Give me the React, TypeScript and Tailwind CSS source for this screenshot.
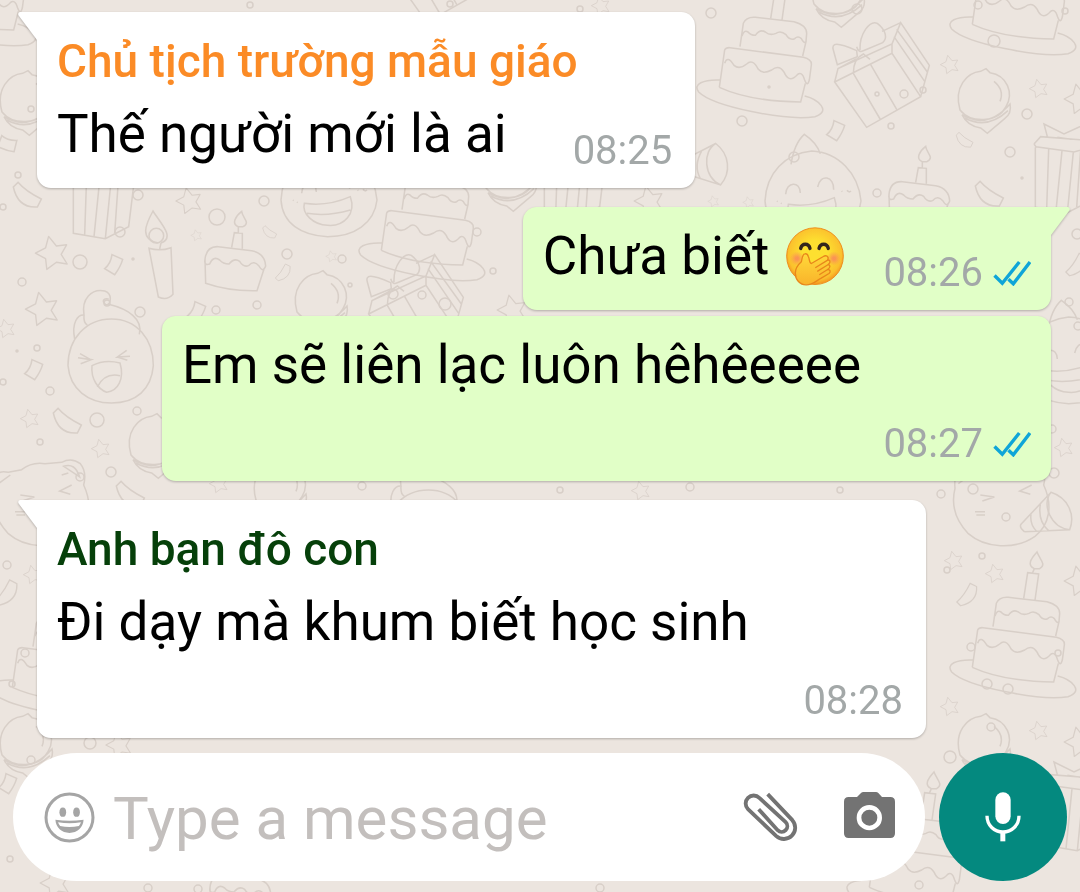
import type { ReactNode } from "react";

type At = { x: number; y: number; r?: number; s?: number };

/* Doodles are drawn on a grid three times finer than the page. */
function Doodle({ x, y, r = 0, s = 1, children }: At & { children: ReactNode }) {
  return <g transform={`translate(${x} ${y}) rotate(${r}) scale(${s / 3})`}>{children}</g>;
}

const Cake = (p: At) => (
  <Doodle {...p}>
    <path d="M90 240C40 238 8 252 26 276C70 320 290 364 375 350C425 334 385 298 344 288" />
    <path d="M88 262Q180 304 332 306L346 250" />
    <path d="M88 262L104 150Q108 142 120 143L340 172Q366 178 364 195L358 240Q352 262 344 240Q336 212 322 224Q300 248 286 224Q270 190 245 210Q218 224 205 208Q188 174 170 192Q148 210 132 196Q112 164 104 190" />
    <path d="M150 140L160 70Q168 50 196 52L312 65Q350 75 350 100L348 125Q342 132 334 116Q324 106 314 116Q298 122 288 104Q272 90 258 100Q240 108 226 96Q210 86 196 106Q182 106 174 96Q162 88 156 108M348 125L338 168" />
    <path d="M242 56L254 -22L287 -18L276 60M268 -20L274 -34M274 -34C252 -44 262 -62 282 -84C290 -62 312 -46 290 -34Z" />
  </Doodle>
);

const Gift = (p: At) => (
  <Doodle {...p}>
    <path d="M434 246L606 160L692 290L530 382ZM434 246L444 206L606 132L632 68L718 196L692 290M606 160V132M444 206L500 176M576 94L632 68M620 88L712 216M612 110L704 244M490 220L572 360M542 194L620 328M490 220Q490 176 520 162L540 178" />
    <path d="M500 152C440 126 424 128 430 150L442 194L502 170ZM510 150C508 100 540 60 562 70C590 92 592 116 578 128L520 152Q506 160 500 140" />
  </Doodle>
);

const Present = (p: At) => (
  <Doodle {...p}>
    <path d="M0 60L20 38L170 50L200 30M0 60L6 68L120 84L200 60M4 70V250L100 266L170 230L190 66M44 76L38 254M84 80L66 260M118 84L100 266M140 78L128 250M40 38L30 0L90 30L150 2L148 46M70 40L110 46" />
  </Doodle>
);

const Star = (p: At) => (
  <Doodle {...p}>
    <path d="M-8 -52L18 -20L52 -24L34 8L54 40L18 34L-14 58L-18 22L-52 4L-18 -14Z" strokeLinejoin="round" />
  </Doodle>
);

const Balloon = (p: At) => (
  <Doodle {...p}>
    <path d="M-72 30C-92 -40 -50 -82 -10 -86L6 -94L18 -82C70 -74 90 -20 66 20C40 70 -40 70 -72 30ZM30 -56Q62 -30 48 4M-66 44Q10 90 78 12Q84 40 62 56L10 100L-10 84Q-50 78 -66 44M-58 54Q10 90 72 32" />
  </Doodle>
);

const Slice = (p: At) => (
  <Doodle {...p}>
    <path d="M0 40Q4 0 40 2L140 14Q180 22 182 60Q174 82 162 60Q146 42 132 58Q116 66 104 46Q88 34 72 54Q54 54 44 42Q24 28 14 54Q-4 60 0 40L2 112Q70 136 156 134L178 66M80 4L88 -40L112 -38L112 8M100 -40V-58M100 -58C78 -66 92 -90 110 -104C112 -84 138 -70 114 -58Z" />
  </Doodle>
);

const Candle = (p: At) => (
  <Doodle {...p}>
    <path d="M0 112Q34 122 66 110L72 250Q54 270 28 258ZM32 114L36 96M28 96C-30 84 -10 40 12 0C34 36 80 80 36 96" />
    <circle cx="22" cy="74" r="22" />
  </Doodle>
);

const Bean = (p: At) => (
  <Doodle {...p}>
    <path d="M-30 -38Q-6 -10 40 12L28 36Q-30 40 -44 -24Z" />
  </Doodle>
);

const Paper = (p: At) => (
  <Doodle {...p}>
    <path d="M-6 -28L26 -14Q20 8 2 32L-28 14Q-10 0 -6 -28Z" />
  </Doodle>
);

const LaughingFace = (p: At) => (
  <Doodle {...p}>
    <path d="M0 140C0 60 54 0 130 0C206 0 256 60 256 140C250 210 206 252 130 252C60 252 6 210 0 140ZM20 60C10 10 30 -14 48 -12C40 -60 70 -92 110 -84C134 -76 130 -44 114 -42C100 -54 106 -64 122 -60M122 -44C180 -30 226 0 214 46M48 -12Q46 12 58 18M30 116L70 122L38 134M36 104L68 122M186 112L148 114L176 94M148 114L178 124M72 140Q110 120 156 132C170 180 150 216 116 220C90 210 68 180 72 140ZM88 204Q110 160 156 170" />
  </Doodle>
);

const SmilingFace = (p: At) => (
  <Doodle {...p}>
    <path d="M0 150C4 66 60 8 140 0C220 4 280 66 288 150C280 220 220 260 140 260C60 256 4 220 0 150ZM78 40Q88 -24 118 -50Q154 -26 166 8M62 130C64 90 106 90 106 126M158 108C166 66 208 76 206 116M70 160Q140 170 208 140C226 190 190 230 140 226C96 224 62 190 70 160ZM78 190Q140 200 208 180M36 150l2 2M48 156l2 2M230 120l2 2M246 118q6 8 12 2" />
  </Doodle>
);

const CatFace = (p: At) => (
  <Doodle {...p}>
    <path d="M-30 70Q-36 10 10 22L50 14Q80 -10 120 -4L170 -8Q200 -24 226 -4Q246 20 236 60C264 120 254 180 210 214C150 256 60 250 10 206C-34 160 -40 110 -30 70ZM-20 56L16 30M176 4Q210 -8 224 36ZM46 90L88 96L52 108M200 60L164 78L196 88M30 140h30M34 150h26M170 30l20 -6" />
  </Doodle>
);

const Horn = (p: At) => (
  <Doodle {...p}>
    <path d="M0 100L90 4C140 20 164 70 146 116L10 122M90 4C60 40 90 110 146 116M58 40Q50 90 82 118M30 70Q26 100 46 120M10 122Q-6 108 0 100" />
  </Doodle>
);

const confetti: [number, number, number][] = [
  [711, 13, 5], [857, 9, 5], [978, 5, 4], [994, 41, 6], [742, 121, 5], [891, 126, 3], [904, 94, 4], [923, 90, 3],
  [877, 94, 2], [769, 87, 1], [1027, 114, 5], [1010, 152, 5], [1022, 178, 1], [877, 193, 4], [794, 157, 5], [1065, 11, 3],
  [138, 195, 5], [217, 217, 8], [264, 201, 5], [120, 232, 5], [80, 262, 7], [22, 282, 4], [133, 259, 1], [287, 254, 5],
  [342, 259, 4], [477, 232, 4], [493, 271, 3], [445, 304, 6], [422, 295, 4], [393, 294, 5], [350, 285, 2], [257, 305, 4],
  [216, 310, 4], [140, 312, 5], [107, 303, 3], [37, 348, 3], [50, 391, 4], [3, 382, 3], [17, 351, 1], [137, 411, 4],
  [97, 420, 7], [40, 442, 3], [111, 472, 5], [80, 477, 4], [362, 486, 4], [941, 494, 4], [973, 489, 5], [1054, 473, 5],
  [1006, 517, 4], [982, 556, 3], [947, 570, 3], [971, 647, 4], [1058, 653, 3], [987, 684, 5], [1008, 689, 5], [991, 727, 4],
  [950, 757, 6], [7, 565, 4], [25, 653, 4], [12, 684, 3], [90, 743, 6], [31, 760, 4], [10, 859, 3], [919, 885, 4],
  [1077, 234, 5], [1078, 326, 4], [1052, 429, 4], [1069, 302, 4], [3, 207, 3], [31, 109, 3], [18, 175, 3], [198, 889, 4],
  [250, 5, 3], [450, 4, 3], [580, 9, 3], [560, 490, 3], [690, 487, 4], [840, 490, 3], [148, 888, 4], [600, 888, 4],
];

function Wallpaper() {
  return (
    <svg
      aria-hidden="true"
      className="absolute inset-0 h-full w-full"
      viewBox="0 0 1080 892"
      preserveAspectRatio="xMinYMin slice"
      fill="none"
      stroke="#d8cfc8"
      strokeWidth="1.5"
    >
      <g strokeWidth="4.6">
        <Cake x={690} y={0} />
        <Cake x={943} y={-63} />
        <Cake x={352} y={163} />
        <Cake x={943} y={580} />
        <Cake x={-97} y={-72} />
        <Cake x={840} y={800} />
        <Cake x={-17} y={600} />
        <Gift x={690} y={0} />
        <Gift x={224} y={232} />
        <Gift x={250} y={-105} />
        <Present x={1034} y={124} />
        <Present x={72} y={150} />
        <Present x={1044} y={762} />
        <Present x={543} y={130} />
        <SmilingFace x={765} y={151} />
        <SmilingFace x={281} y={150} />
        <SmilingFace x={1022} y={317} />
        <LaughingFace x={68} y={319} />
        <LaughingFace x={385} y={490} />
        <CatFace x={5} y={465} />
        <CatFace x={965} y={465} />
        <Horn x={1021} y={491} />
        <Horn x={688} y={132} r={20} />
        <Balloon x={984} y={100} />
        <Balloon x={838} y={-6} />
        <Balloon x={321} y={302} />
        <Balloon x={155} y={445} />
        <Balloon x={26} y={102} />
        <Balloon x={26} y={745} />
        <Balloon x={984} y={745} />
        <Balloon x={510} y={178} />
        <Balloon x={280} y={490} />
        <Slice x={889} y={181} />
        <Slice x={205} y={246} />
        <Slice x={210} y={874} />
        <Candle x={149} y={211} />
        <Star x={51} y={252} s={0.9} />
        <Star x={41} y={308} s={0.9} />
        <Star x={188} y={200} s={0.7} />
        <Star x={5} y={328} s={0.5} />
        <Star x={29} y={418} s={0.5} />
        <Star x={100} y={448} s={0.5} />
        <Star x={331} y={256} s={0.3} />
        <Star x={196} y={235} s={0.3} />
        <Star x={511} y={309} s={0.8} />
        <Star x={949} y={64} s={0.5} />
        <Star x={1038} y={88} s={0.5} />
        <Star x={1078} y={98} s={0.8} />
        <Star x={748} y={202} s={0.3} />
        <Star x={713} y={201} s={0.3} />
        <Star x={648} y={200} s={0.8} />
        <Star x={994} y={573} s={0.5} />
        <Star x={953} y={560} s={0.5} />
        <Star x={1078} y={580} s={0.8} />
        <Star x={949} y={706} s={0.5} />
        <Star x={1038} y={730} s={0.5} />
        <Star x={1078} y={741} s={0.8} />
        <Star x={118} y={744} s={0.7} />
        <Star x={54} y={882} s={0.8} />
        <Star x={32} y={574} s={0.5} />
        <Star x={1063} y={447} s={0.5} />
        <Star x={218} y={483} s={0.5} />
        <Star x={600} y={5} s={0.5} />
        <Star x={640} y={490} s={0.5} />
        <Bean x={28} y={195} />
        <Bean x={68} y={421} />
        <Bean x={131} y={494} />
        <Bean x={990} y={194} />
        <Bean x={965} y={140} s={0.6} />
        <Bean x={967} y={594} s={0.8} r={-90} />
        <Bean x={6} y={592} s={0.9} r={-90} />
        <Bean x={283} y={272} s={0.6} r={-90} />
        <Bean x={270} y={232} s={0.5} />
        <Bean x={1076} y={264} s={0.8} r={-90} />
        <Paper x={836} y={130} />
        <Paper x={114} y={264} />
        <Paper x={34} y={369} />
        <Paper x={197} y={311} />
        <Paper x={8} y={783} />
        <Paper x={8} y={144} r={80} />
      </g>
      {confetti.map(([cx, cy, r]) => (
        <circle key={`${cx}-${cy}`} cx={cx} cy={cy} r={r} />
      ))}
    </svg>
  );
}

function GiggleEmoji() {
  return (
    <svg role="img" aria-label="Giggling face with hand over mouth" viewBox="0 0 180 176" className="h-[59px] w-[60px]">
      <defs>
        <radialGradient id="skin" cx="0.5" cy="0.45" r="0.55">
          <stop offset="0.4" stopColor="#fde030" />
          <stop offset="0.85" stopColor="#fbc02d" />
          <stop offset="1" stopColor="#f4921e" />
        </radialGradient>
        <radialGradient id="blush">
          <stop offset="0.2" stopColor="#fa8a5a" stopOpacity="0.85" />
          <stop offset="1" stopColor="#fa9a50" stopOpacity="0" />
        </radialGradient>
        <linearGradient id="hand" x1="0" y1="0" x2="0" y2="1">
          <stop offset="0" stopColor="#ffd93a" />
          <stop offset="1" stopColor="#f9b32a" />
        </linearGradient>
      </defs>
      <circle cx="90" cy="87" r="85" fill="url(#skin)" stroke="#ee8f1f" strokeWidth="3" />
      <circle cx="36" cy="94" r="22" fill="url(#blush)" />
      <circle cx="147" cy="94" r="22" fill="url(#blush)" />
      <g fill="none" stroke="#33251c" strokeWidth="10" strokeLinecap="round">
        <path d="M47 64C51 47 71 47 75 64" />
        <path d="M102 64C106 47 126 47 130 64" />
      </g>
      <path
        d="M60 80C52 80 52 92 49 104C40 112 31 124 31 138C31 158 45 173 63 173C83 174 94 160 109 153L132 139C139 133 134 126 128 127C137 121 136 114 130 112C139 104 134 97 128 99C133 89 124 82 115 88L79 109C72 108 75 98 70 88C68 82 64 79 60 80Z"
        fill="url(#hand)"
        stroke="#e8871b"
        strokeWidth="4"
        strokeLinejoin="round"
      />
      <path d="M128 99L92 121M130 112L98 132M128 127L104 142" fill="none" stroke="#e8871b" strokeWidth="4" strokeLinecap="round" />
    </svg>
  );
}

function ReadTicks() {
  return (
    <svg role="img" aria-label="Read" viewBox="0 0 38 26" className="h-[26px] w-[38px]" fill="none" stroke="#0fa5d8" strokeWidth="3.4">
      <path d="M1.5 15.5L9.3 23.3L26.3 2" />
      <path d="M15.5 19.2L20.3 23.8L37 2" />
    </svg>
  );
}

type MessageProps = {
  time: string;
  author?: string;
  authorClass?: string;
  mine?: boolean;
  tail?: boolean;
  wide?: boolean;
  children: ReactNode;
};

function Message({ time, author, authorClass = "", mine = false, tail = false, wide = false, children }: MessageProps) {
  const corner = tail ? (mine ? "rounded-tr-none" : "rounded-tl-none") : "";
  return (
    <article
      className={`relative max-w-[889px] rounded-[14px] py-[17px] pl-5 drop-shadow-[0_1px_1px_rgba(0,0,0,0.25)] ${
        mine ? "self-end bg-[#e1ffc7] pr-5" : "self-start bg-white pr-[23px]"
      } ${wide ? "w-full" : ""} ${corner}`}
    >
      {tail && (
        <svg
          aria-hidden="true"
          viewBox="0 0 20 30"
          className={`absolute top-0 h-[30px] w-5 ${mine ? "-right-[19px] -scale-x-100 fill-[#e1ffc7]" : "-left-[19px] fill-white"}`}
        >
          <path d="M20 0H2Q-1 1 1 4L19 28L20 30Z" />
        </svg>
      )}
      {author && <h2 className={`mb-[9px] text-[46px] leading-[64px] font-medium ${authorClass}`}>{author}</h2>}
      <div className="flex flex-wrap items-end justify-between">
        <p className="flex items-center gap-4 pb-[5px] text-[53px] leading-[64px] text-black">{children}</p>
        <div className={`flex grow items-center justify-end gap-2.5 pt-[22px] ${mine ? "pl-[38px]" : "pl-[66px]"}`}>
          <time className="text-[40px] leading-10 text-[#a3a8a8]">{time}</time>
          {mine && <ReadTicks />}
        </div>
      </div>
    </article>
  );
}

function SmileIcon() {
  return (
    <svg aria-hidden="true" viewBox="0 0 152 152" className="size-[51px] text-[#a5a5a5]" fill="currentColor">
      <circle cx="76" cy="76" r="70" fill="none" stroke="currentColor" strokeWidth="9" />
      <ellipse cx="56" cy="60" rx="10" ry="14" />
      <ellipse cx="97" cy="60" rx="10" ry="14" />
      <path d="M34 83Q76 89 118 83C117 106 99 122 76 122C53 122 35 106 34 83Z" />
      <path d="M42 90Q76 96 110 90Q108 97 104 101Q76 107 48 101Q44 97 42 90Z" fill="#fff" />
    </svg>
  );
}

function ClipIcon() {
  return (
    <svg aria-hidden="true" viewBox="128 156 168 152" className="h-[51px] w-14" fill="none" stroke="#737373" strokeWidth="11.5">
      <path d="M202 162L276 240A34 34 0 0 1 228 288L143 207A24 24 0 0 1 177 173L256 246A16 16 0 0 1 232 270L175 207" />
    </svg>
  );
}

function CameraIcon() {
  return (
    <svg aria-hidden="true" viewBox="0 0 153 153" className="size-[51px]" fill="#737373">
      <path d="M39 15L51 3Q54 0 58 0H96Q100 0 103 3L114 15H139Q153 15 153 29V124Q153 138 139 138H14Q0 138 0 124V29Q0 15 14 15Z" />
      <circle cx="76" cy="77" r="31" fill="none" stroke="#fff" strokeWidth="14" />
    </svg>
  );
}

function MicIcon() {
  return (
    <svg aria-hidden="true" viewBox="0 0 108 150" className="h-[50px] w-9" fill="#fff">
      <rect x="31" y="1" width="46" height="95" rx="23" />
      <path d="M6 71C6 100 28 120 54 120S102 100 102 71" fill="none" stroke="#fff" strokeWidth="10" />
      <path d="M46 118H61V148H46Z" />
    </svg>
  );
}

export default function App() {
  return (
    <main className="relative isolate flex min-h-screen flex-col overflow-hidden bg-[#ece5df] pt-3 pb-[11px] font-['Roboto','Noto_Sans',sans-serif]">
      <Wallpaper />
      <section aria-label="Messages" className="relative flex grow flex-col gap-[19px] pr-[29px] pl-[37px]">
        <Message author="Chủ tịch trường mẫu giáo" authorClass="text-[#fb8b26]" time="08:25" tail>
          Thế người mới là ai
        </Message>
        <div className="flex flex-col gap-1.5">
          <Message time="08:26" mine tail>
            Chưa biết
            <GiggleEmoji />
          </Message>
          <Message time="08:27" mine wide>
            Em sẽ liên lạc luôn hêhêeeee
          </Message>
        </div>
        <Message author="Anh bạn đô con" authorClass="text-[#06400a]" time="08:28" tail wide>
          Đi dạy mà khum biết học sinh
        </Message>
      </section>
      <form className="relative mt-[15px] flex items-center gap-3.5 px-[13px]" onSubmit={(e) => e.preventDefault()}>
        <div className="flex h-32 min-w-0 grow items-center rounded-full bg-white pr-[30px] pl-[31px]">
          <button type="button" aria-label="Emoji">
            <SmileIcon />
          </button>
          <input
            type="text"
            aria-label="Message"
            placeholder="Type a message"
            className="ml-[18px] min-w-0 grow bg-transparent pt-1 text-[60px] leading-[72px] text-black outline-none placeholder:text-[#c3bfbd]"
          />
          <button type="button" aria-label="Attach" className="mr-[45px]">
            <ClipIcon />
          </button>
          <button type="button" aria-label="Camera">
            <CameraIcon />
          </button>
        </div>
        <button type="button" aria-label="Record voice message" className="flex size-32 shrink-0 items-center justify-center rounded-full bg-[#04897f]">
          <MicIcon />
        </button>
      </form>
    </main>
  );
}
